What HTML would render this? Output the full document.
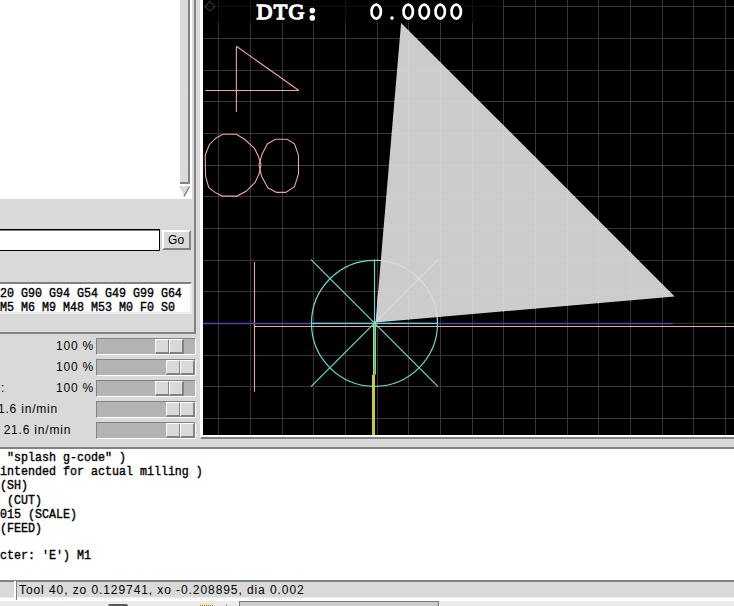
<!DOCTYPE html>
<html><head><meta charset="utf-8">
<style>
html,body{margin:0;padding:0}
body{width:734px;height:606px;overflow:hidden;background:#d9d9d9;position:relative;font-family:"Liberation Sans",sans-serif;}
.a{position:absolute;box-sizing:border-box}
.mono{font-family:"Liberation Mono",monospace;transform-origin:0 0;transform:scaleY(1.15);-webkit-text-stroke:0.35px #000}
.lbl{position:absolute;font-size:12px;color:#000;white-space:pre;letter-spacing:0.8px;line-height:14px}
</style></head><body>

<!-- top-left text widget -->
<div class="a" style="left:0;top:0;width:192px;height:199px;background:#fff"></div>
<!-- scrollbar slider -->
<div class="a" style="left:180px;top:0;width:10px;height:184px;background:#d9d9d9;border-right:2px solid #828282;border-bottom:2px solid #828282"></div>
<svg class="a" style="left:176px;top:184px" width="16" height="15" viewBox="0 0 16 15">
  <polygon points="2,2 14,2 8,13" fill="#d9d9d9"/>
  <line x1="2.5" y1="2.5" x2="8" y2="12.5" stroke="#fff" stroke-width="1.5"/>
  <line x1="13.5" y1="2.5" x2="8" y2="12.5" stroke="#828282" stroke-width="1.5"/>
</svg>

<!-- left frame border -->
<div class="a" style="left:194px;top:0;width:2px;height:334px;background:#828282"></div>
<div class="a" style="left:0;top:332px;width:196px;height:2px;background:#828282"></div>

<!-- MDI entry -->
<div class="a" style="left:0;top:229px;width:160px;height:22px;border:1px solid #000;border-left:none;background:#fff"></div>
<div class="a" style="left:0;top:230px;width:159px;height:1px;background:#828282"></div>
<!-- Go button -->
<div class="a" style="left:162px;top:230px;width:29px;height:20px;background:#d9d9d9;border-top:2px solid #fff;border-left:2px solid #fff;border-right:2px solid #828282;border-bottom:2px solid #828282"></div>
<div class="lbl" style="left:168px;top:233px;font-size:12px;letter-spacing:0.2px">Go</div>

<!-- active gcodes -->
<div class="a" style="left:0;top:282px;width:192px;height:32px;background:#fff;border-top:2px solid #828282;border-right:2px solid #ececec;border-bottom:2px solid #ececec"></div>
<div class="lbl mono" style="left:0;top:287px;font-size:11.67px;letter-spacing:0;line-height:12.174px">20 G90 G94 G54 G49 G99 G64
M5 M6 M9 M48 M53 M0 F0 S0</div>

<!-- sliders -->
<div class="a" style="left:96px;top:338px;width:100px;height:17px;background:#b3b3b3;border-top:1px solid #828282;border-left:1px solid #828282;border-bottom:1px solid #fff;border-right:1px solid #fff"></div>
<div class="a" style="left:155px;top:339px;width:15px;height:15px;background:#d9d9d9;border-top:1px solid #fff;border-left:1px solid #fff;border-bottom:2px solid #828282;border-right:2px solid #828282"></div>
<div class="a" style="left:169px;top:339px;width:15px;height:15px;background:#d9d9d9;border-top:1px solid #fff;border-left:1px solid #fff;border-bottom:2px solid #828282;border-right:2px solid #828282"></div>
<div class="a" style="left:96px;top:359px;width:100px;height:17px;background:#b3b3b3;border-top:1px solid #828282;border-left:1px solid #828282;border-bottom:1px solid #fff;border-right:1px solid #fff"></div>
<div class="a" style="left:166px;top:360px;width:15px;height:15px;background:#d9d9d9;border-top:1px solid #fff;border-left:1px solid #fff;border-bottom:2px solid #828282;border-right:2px solid #828282"></div>
<div class="a" style="left:180px;top:360px;width:15px;height:15px;background:#d9d9d9;border-top:1px solid #fff;border-left:1px solid #fff;border-bottom:2px solid #828282;border-right:2px solid #828282"></div>
<div class="a" style="left:96px;top:380px;width:100px;height:17px;background:#b3b3b3;border-top:1px solid #828282;border-left:1px solid #828282;border-bottom:1px solid #fff;border-right:1px solid #fff"></div>
<div class="a" style="left:155px;top:381px;width:15px;height:15px;background:#d9d9d9;border-top:1px solid #fff;border-left:1px solid #fff;border-bottom:2px solid #828282;border-right:2px solid #828282"></div>
<div class="a" style="left:169px;top:381px;width:15px;height:15px;background:#d9d9d9;border-top:1px solid #fff;border-left:1px solid #fff;border-bottom:2px solid #828282;border-right:2px solid #828282"></div>
<div class="a" style="left:96px;top:401px;width:100px;height:17px;background:#b3b3b3;border-top:1px solid #828282;border-left:1px solid #828282;border-bottom:1px solid #fff;border-right:1px solid #fff"></div>
<div class="a" style="left:166px;top:402px;width:15px;height:15px;background:#d9d9d9;border-top:1px solid #fff;border-left:1px solid #fff;border-bottom:2px solid #828282;border-right:2px solid #828282"></div>
<div class="a" style="left:180px;top:402px;width:15px;height:15px;background:#d9d9d9;border-top:1px solid #fff;border-left:1px solid #fff;border-bottom:2px solid #828282;border-right:2px solid #828282"></div>
<div class="a" style="left:96px;top:422px;width:100px;height:17px;background:#b3b3b3;border-top:1px solid #828282;border-left:1px solid #828282;border-bottom:1px solid #fff;border-right:1px solid #fff"></div>
<div class="a" style="left:166px;top:423px;width:15px;height:15px;background:#d9d9d9;border-top:1px solid #fff;border-left:1px solid #fff;border-bottom:2px solid #828282;border-right:2px solid #828282"></div>
<div class="a" style="left:180px;top:423px;width:15px;height:15px;background:#d9d9d9;border-top:1px solid #fff;border-left:1px solid #fff;border-bottom:2px solid #828282;border-right:2px solid #828282"></div>
<div class="lbl" style="right:640px;top:339px;text-align:right">100 %</div>
<div class="lbl" style="right:640px;top:360px;text-align:right">100 %</div>
<div class="lbl" style="right:640px;top:381px;text-align:right">100 %</div>
<div class="lbl" style="left:1px;top:381px">:</div>
<div class="lbl" style="left:-2px;top:402px">1.6 in/min</div>
<div class="lbl" style="left:-0.5px;top:423px"> 21.6 in/min</div>

<!-- canvas surround -->
<div class="a" style="left:200px;top:0;width:3px;height:437px;background:#fff"></div>
<div class="a" style="left:201px;top:435px;width:533px;height:2px;background:#fff"></div>
<div class="a" style="left:201px;top:437px;width:533px;height:2px;background:#828282"></div>
<div class="a" style="left:0;top:447px;width:734px;height:2px;background:#828282"></div>

<svg class="a" style="left:203px;top:0" width="531" height="435" viewBox="203 0 531 435">
  <rect x="203" y="0" width="531" height="435" fill="#000"/>
  <g stroke="#363636" stroke-width="1">
<line x1="218.5" y1="0" x2="218.5" y2="435"/>
<line x1="250.5" y1="0" x2="250.5" y2="435"/>
<line x1="282.5" y1="0" x2="282.5" y2="435"/>
<line x1="313.5" y1="0" x2="313.5" y2="435"/>
<line x1="345.5" y1="0" x2="345.5" y2="435"/>
<line x1="377.5" y1="0" x2="377.5" y2="435"/>
<line x1="408.5" y1="0" x2="408.5" y2="435"/>
<line x1="440.5" y1="0" x2="440.5" y2="435"/>
<line x1="472.5" y1="0" x2="472.5" y2="435"/>
<line x1="503.5" y1="0" x2="503.5" y2="435"/>
<line x1="535.5" y1="0" x2="535.5" y2="435"/>
<line x1="567.5" y1="0" x2="567.5" y2="435"/>
<line x1="598.5" y1="0" x2="598.5" y2="435"/>
<line x1="630.5" y1="0" x2="630.5" y2="435"/>
<line x1="662.5" y1="0" x2="662.5" y2="435"/>
<line x1="693.5" y1="0" x2="693.5" y2="435"/>
<line x1="725.5" y1="0" x2="725.5" y2="435"/>
<line x1="203" y1="6.5" x2="734" y2="6.5"/>
<line x1="203" y1="38.5" x2="734" y2="38.5"/>
<line x1="203" y1="70.5" x2="734" y2="70.5"/>
<line x1="203" y1="101.5" x2="734" y2="101.5"/>
<line x1="203" y1="133.5" x2="734" y2="133.5"/>
<line x1="203" y1="165.5" x2="734" y2="165.5"/>
<line x1="203" y1="196.5" x2="734" y2="196.5"/>
<line x1="203" y1="228.5" x2="734" y2="228.5"/>
<line x1="203" y1="260.5" x2="734" y2="260.5"/>
<line x1="203" y1="291.5" x2="734" y2="291.5"/>
<line x1="203" y1="323.5" x2="734" y2="323.5"/>
<line x1="203" y1="355.5" x2="734" y2="355.5"/>
<line x1="203" y1="386.5" x2="734" y2="386.5"/>
<line x1="203" y1="418.5" x2="734" y2="418.5"/>
  </g>
  <polygon points="401.1,22.9 674.7,296.5 375.5,322.6" fill="#cccccc"/>
  <clipPath id="pc"><polygon points="401.1,22.9 674.7,296.5 375.5,322.6"/></clipPath>
  <g clip-path="url(#pc)" stroke="#d0d0d0" stroke-width="1">
<line x1="218.5" y1="0" x2="218.5" y2="435"/>
<line x1="250.5" y1="0" x2="250.5" y2="435"/>
<line x1="282.5" y1="0" x2="282.5" y2="435"/>
<line x1="313.5" y1="0" x2="313.5" y2="435"/>
<line x1="345.5" y1="0" x2="345.5" y2="435"/>
<line x1="377.5" y1="0" x2="377.5" y2="435"/>
<line x1="408.5" y1="0" x2="408.5" y2="435"/>
<line x1="440.5" y1="0" x2="440.5" y2="435"/>
<line x1="472.5" y1="0" x2="472.5" y2="435"/>
<line x1="503.5" y1="0" x2="503.5" y2="435"/>
<line x1="535.5" y1="0" x2="535.5" y2="435"/>
<line x1="567.5" y1="0" x2="567.5" y2="435"/>
<line x1="598.5" y1="0" x2="598.5" y2="435"/>
<line x1="630.5" y1="0" x2="630.5" y2="435"/>
<line x1="662.5" y1="0" x2="662.5" y2="435"/>
<line x1="693.5" y1="0" x2="693.5" y2="435"/>
<line x1="725.5" y1="0" x2="725.5" y2="435"/>
<line x1="203" y1="6.5" x2="734" y2="6.5"/>
<line x1="203" y1="38.5" x2="734" y2="38.5"/>
<line x1="203" y1="70.5" x2="734" y2="70.5"/>
<line x1="203" y1="101.5" x2="734" y2="101.5"/>
<line x1="203" y1="133.5" x2="734" y2="133.5"/>
<line x1="203" y1="165.5" x2="734" y2="165.5"/>
<line x1="203" y1="196.5" x2="734" y2="196.5"/>
<line x1="203" y1="228.5" x2="734" y2="228.5"/>
<line x1="203" y1="260.5" x2="734" y2="260.5"/>
<line x1="203" y1="291.5" x2="734" y2="291.5"/>
<line x1="203" y1="323.5" x2="734" y2="323.5"/>
<line x1="203" y1="355.5" x2="734" y2="355.5"/>
<line x1="203" y1="386.5" x2="734" y2="386.5"/>
<line x1="203" y1="418.5" x2="734" y2="418.5"/>
  </g>
  <g fill="none" stroke="#eaa6a6" stroke-width="1.1">
    <line x1="236.4" y1="46.3" x2="236.4" y2="111.9"/>
    <line x1="205.2" y1="90.5" x2="298.9" y2="90.5"/>
    <line x1="236.4" y1="46.3" x2="298.9" y2="90.5"/>
    <polygon points="222.9,134.2 236.5,134.2 245.2,139.8 254.5,148.4 258.5,156.5 261,165 259,174 255.1,182.5 246.4,191.1 237.1,196.1 222.3,196.1 214.9,192.4 208.7,187.4 205.6,176.3 205.2,155.2 209.3,144.7 216.1,137.9"/>
    <polygon points="275.4,139.2 287,139.2 294.5,143.9 298.5,155.4 298.5,173.9 294.5,186.6 285.8,192.4 276.6,192.4 267.9,187.8 261.5,176.2 259,165 262,154.3 267.3,143.9"/>
    <line x1="254.5" y1="262" x2="254.5" y2="391.8"/>
    <line x1="254.5" y1="326.5" x2="734" y2="326.5"/>
  </g>
  <line x1="203" y1="323.5" x2="673" y2="323.5" stroke="#4848b8" stroke-width="1.4"/>
  <line x1="673" y1="323.4" x2="734" y2="323.4" stroke="#1a3a1a" stroke-width="1.2"/>
  <path d="M374.5,260.3 A63,63 0 0 0 311.5,323.3 A63,63 0 0 0 374.5,386.3 A63,63 0 0 0 437.5,323.3" fill="none" stroke="#66dcd0" stroke-width="1.2"/>
  <path d="M437.5,323.3 A63,63 0 0 0 374.5,260.3" fill="none" stroke="#d9dede" stroke-width="1.1"/>
  <g stroke="#66dcd0" stroke-width="1.2">
    <line x1="311" y1="323.4" x2="438" y2="323.4"/>
    <line x1="374.5" y1="259.7" x2="374.5" y2="323.4"/>
    <line x1="311" y1="259.7" x2="438" y2="386.7"/>
    <line x1="311" y1="386.7" x2="374.5" y2="323.2"/>
  </g>
  <line x1="374.5" y1="323.2" x2="438" y2="259.7" stroke="#d9dede" stroke-width="1.1"/>
  <rect x="373" y="323.5" width="1.5" height="51.2" fill="#b0dc68"/>
  <rect x="374.5" y="323.5" width="1.5" height="51.2" fill="#78e49c"/>
  <rect x="372" y="374.7" width="3" height="60.3" fill="#cccc2c"/>
  <rect x="203" y="0" width="300" height="23" fill="#000" fill-opacity="0.65"/>
  <polygon points="210,1.5 214.9,6.4 210,11.3 205.1,6.4" fill="none" stroke="#3a3434" stroke-width="1.1"/>
  <g font-family="Liberation Serif" font-size="22" fill="#fff" stroke="#fff" stroke-width="1.4"><text x="264.5" y="19.1" text-anchor="middle">D</text><text x="280.5" y="19.1" text-anchor="middle">T</text><text x="296.5" y="19.1" text-anchor="middle">G</text><circle cx="312.3" cy="10.6" r="2.1"/><circle cx="312.3" cy="17.9" r="2.1"/></g><circle cx="392" cy="18.1" r="1.8" fill="#fff"/><g fill="none" stroke="#fff" stroke-width="2.7"><ellipse cx="376.2" cy="11.6" rx="4.7" ry="7.0"/><ellipse cx="408.2" cy="11.6" rx="4.7" ry="7.0"/><ellipse cx="424.2" cy="11.6" rx="4.7" ry="7.0"/><ellipse cx="440.2" cy="11.6" rx="4.7" ry="7.0"/><ellipse cx="456.2" cy="11.6" rx="4.7" ry="7.0"/></g>
</svg>

<!-- bottom code text -->
<div class="a" style="left:0;top:449px;width:734px;height:131px;background:#fff"></div>
<div class="lbl mono" style="left:0;top:450.5px;font-size:11.67px;letter-spacing:0;line-height:12.174px"> "splash g-code" )
intended for actual milling )
(SH)
 (CUT)
015 (SCALE)
(FEED)

cter: 'E') M1</div>

<!-- status bar -->
<div class="a" style="left:0;top:580px;width:734px;height:2px;background:#828282"></div>
<div class="a" style="left:0;top:582px;width:734px;height:15px;background:#d9d9d9"></div>
<div class="a" style="left:14px;top:581px;width:2px;height:17px;background:#fff"></div>
<div class="a" style="left:16px;top:581px;width:1px;height:17px;background:#828282"></div>
<div class="lbl" style="left:19px;top:583px;font-size:12px;letter-spacing:0.92px">Tool 40, zo 0.129741, xo -0.208895, dia 0.002</div>
<div class="a" style="left:0;top:597px;width:734px;height:1px;background:#ececec"></div>
<div class="a" style="left:0;top:598px;width:734px;height:3px;background:#fff"></div>
<div class="a" style="left:0;top:601px;width:734px;height:5px;background:#ececec"></div>
<div class="a" style="left:16px;top:581px;width:1px;height:19px;background:#828282"></div>
<div class="a" style="left:108px;top:604px;width:20px;height:2px;background:#5a5a5a;border-radius:2px 2px 0 0"></div>
<div class="a" style="left:200px;top:603px;width:14px;height:3px;background:#efe6b8"></div>
<div class="a" style="left:200px;top:605px;width:14px;height:1px;background:repeating-linear-gradient(90deg,#8a7a50 0 1px,transparent 1px 2px)"></div>
<div class="a" style="left:226px;top:604px;width:1px;height:2px;background:#9a9a9a"></div>
<div class="a" style="left:239px;top:601px;width:200px;height:5px;background:#cfcccc;border:1px solid #777;border-bottom:none"></div>

</body></html>
